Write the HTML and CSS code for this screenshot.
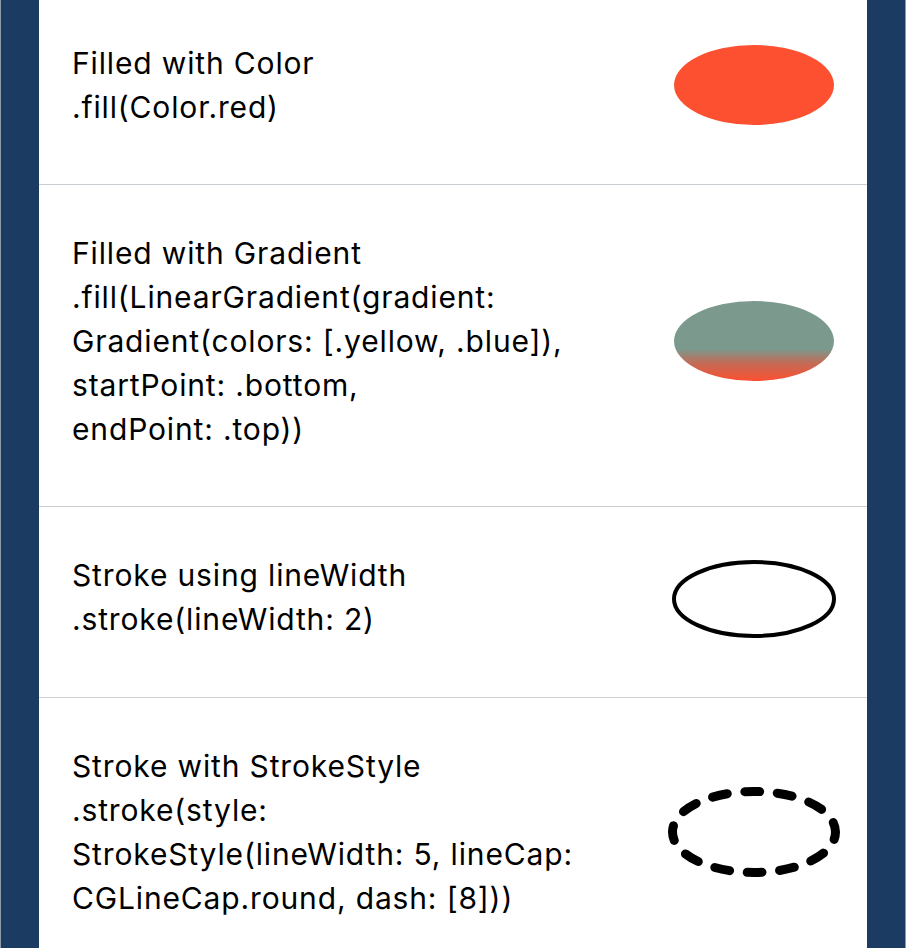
FILE: index.html
```html
<!DOCTYPE html>
<html>
<head>
<meta charset="utf-8">
<link rel="stylesheet" href="styles.css">
</head>
<body>
<main class="list">
  <section class="row row-first">
    <p class="label">Filled with Color<br>.fill(Color.red)</p>
    <svg class="shape" viewBox="0 0 180 100" width="180" height="100">
      <ellipse cx="90" cy="50" rx="80" ry="40" fill="#fc5030"/>
    </svg>
  </section>
  <section class="row">
    <p class="label">Filled with Gradient<br>.fill(LinearGradient(gradient:<br>Gradient(colors: [.yellow, .blue]),<br>startPoint: .bottom,<br>endPoint: .top))</p>
    <svg class="shape" viewBox="0 0 180 100" width="180" height="100">
      <defs>
        <linearGradient id="grad" x1="0" y1="0" x2="0" y2="1">
          <stop offset="0" stop-color="#7b998d"/>
          <stop offset="0.6" stop-color="#7b998d"/>
          <stop offset="0.78" stop-color="#c46a55"/>
          <stop offset="1" stop-color="#fc5030"/>
        </linearGradient>
      </defs>
      <ellipse cx="90" cy="50" rx="80" ry="40" fill="url(#grad)"/>
    </svg>
  </section>
  <section class="row row-third">
    <p class="label">Stroke using lineWidth<br>.stroke(lineWidth: 2)</p>
    <svg class="shape" viewBox="0 0 180 100" width="180" height="100">
      <ellipse cx="90" cy="52" rx="80" ry="37" fill="none" stroke="#000" stroke-width="4"/>
    </svg>
  </section>
  <section class="row">
    <p class="label">Stroke with StrokeStyle<br>.stroke(style:<br>StrokeStyle(lineWidth: 5, lineCap:<br>CGLineCap.round, dash: [8]))</p>
    <svg class="shape" viewBox="0 0 180 100" width="180" height="100">
      <ellipse cx="90" cy="50" rx="81.5" ry="40.5" fill="none" stroke="#000" stroke-width="9" stroke-linecap="round" stroke-dasharray="15 17.6" stroke-dashoffset="7.5"/>
    </svg>
  </section>
</main>
</body>
</html>
```
FILE: styles.css
```css
html, body {
  margin: 0;
  padding: 0;
  height: 100%;
  overflow: hidden;
}
body {
  background: #1b3b63;
  border-left: 1px solid #8e9bab;
  border-right: 1px solid #8e9bab;
  box-sizing: border-box;
}
.list {
  margin: 0 38px;
  background: #ffffff;
  min-height: 100%;
}
.row {
  display: flex;
  align-items: center;
  justify-content: space-between;
  padding: 46px 23px 55px 33px;
  border-bottom: 1px solid #c9ced3;
}
.row-first {
  padding-top: 41px;
}
.row-third {
  padding-bottom: 56px;
  border-bottom-color: #d3d3d3;
}
.label {
  margin: 0;
  font-family: Inter, "Liberation Sans", sans-serif;
  font-size: 30px;
  line-height: 44px;
  letter-spacing: 0.85px;
  color: #000;
}
.shape {
  display: block;
  flex: none;
  margin: -6px 0 -6px;
}
```
